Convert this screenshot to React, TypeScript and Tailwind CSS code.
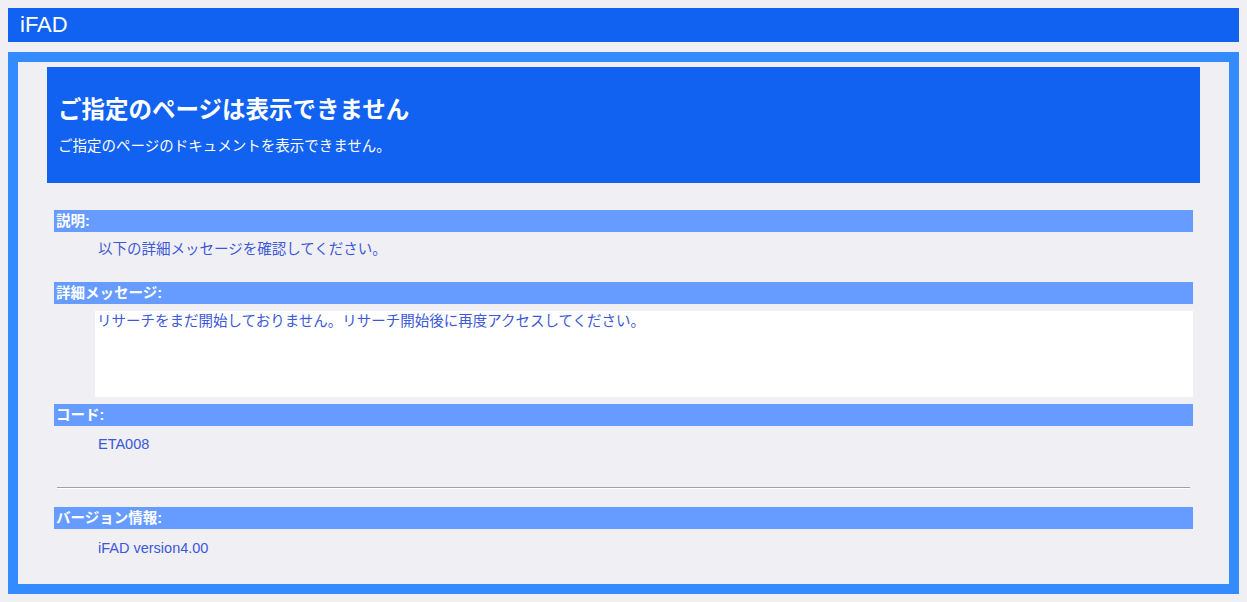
import React from 'react';

const font = { fontFamily: '"Liberation Sans", "Noto Sans CJK JP", sans-serif' };

function SectionHead({ label }: { label: string }) {
  return (
    <div className="mx-[36px] h-[22px] bg-[#669cff] pl-[2px] text-[14.5px] font-bold leading-[22px] text-white">
      {label}
    </div>
  );
}

function App() {
  return (
    <div className="min-h-screen bg-[#f0eff4] p-2" style={font}>
      <div className="h-[34px] bg-[#1262f1] pl-3 text-[22px] leading-[34px] text-white">iFAD</div>
      <div className="mt-[10px] h-[542px] border-[10px] border-[#338bff] bg-[#f0eff4] pt-[5px]">
        <div className="mx-[29px] h-[116px] bg-[#1262f1] px-[11px] pt-[27px] text-white">
          <h1 className="text-[23.5px] font-bold leading-[32px]">ご指定のページは表示できません</h1>
          <p className="mt-[10px] text-[14.5px] leading-[20px]">ご指定のページのドキュメントを表示できません。</p>
        </div>

        <div className="mt-[27px]">
          <SectionHead label="説明:" />
          <p className="ml-[80px] mt-[7px] text-[14.5px] leading-[20px] text-[#3c58d8]">
            以下の詳細メッセージを確認してください。
          </p>
        </div>

        <div className="mt-[23px]">
          <SectionHead label="詳細メッセージ:" />
          <div className="ml-[77px] mr-[36px] mt-[7px] h-[86px] bg-white pl-[2px] text-[14.5px] leading-[20px] text-[#3c58d8]">
            リサーチをまだ開始しておりません。リサーチ開始後に再度アクセスしてください。
          </div>
        </div>

        <div className="mt-[7px]">
          <SectionHead label="コード:" />
          <p className="ml-[80px] mt-[8px] text-[14.5px] leading-[20px] text-[#3c58d8]">ETA008</p>
        </div>

        <hr className="mx-[39px] mt-[33px] border-t border-b border-t-[#a0a0a0] border-b-white" />

        <div className="mt-[18px]">
          <SectionHead label="バージョン情報:" />
          <p className="ml-[80px] mt-[9px] text-[14.5px] leading-[20px] text-[#3c58d8]">iFAD version4.00</p>
        </div>
      </div>
    </div>
  );
}

export default App;
